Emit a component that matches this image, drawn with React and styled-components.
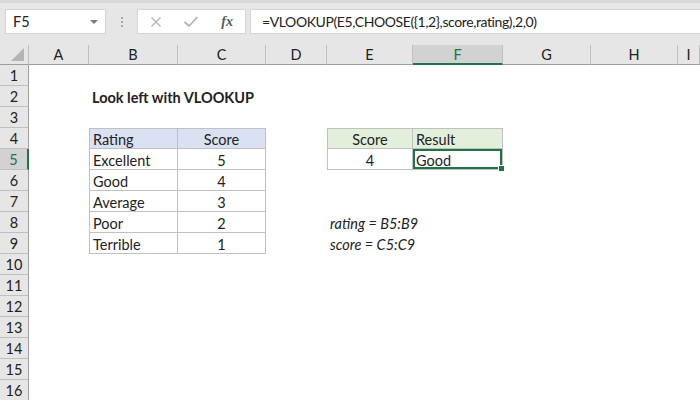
import React from "react";
import styled, { createGlobalStyle } from "styled-components";

const GREEN = "#217346";
const LINE = "#c0c0c0";

const GlobalStyle = createGlobalStyle`
  html, body {
    margin: 0;
    padding: 0;
    background: #ffffff;
    overflow: hidden;
  }
  body {
    font-family: "Lato", "Liberation Sans", sans-serif;
    color: #222;
  }
`;

const Window = styled.div`
  width: 700px;
  height: 400px;
  overflow: hidden;
  background: #fff;
`;

const TopBar = styled.div`
  height: 45px;
  box-sizing: border-box;
  background: #e6e6e6;
  border-top: 3px solid #dadada;
  display: flex;
  align-items: flex-start;
  padding: 6px 0 0 5px;
`;

const NameBox = styled.div`
  width: 101px;
  height: 25px;
  box-sizing: border-box;
  background: #fff;
  border: 1px solid #d4d4d4;
  display: flex;
  align-items: center;
  justify-content: space-between;
  padding: 0 7px 0 7px;
  font-size: 14.5px;
`;

const Caret = styled.span`
  width: 0;
  height: 0;
  border-left: 4px solid transparent;
  border-right: 4px solid transparent;
  border-top: 4px solid #7a7a7a;
`;

const Grip = styled.div`
  width: 31px;
  height: 25px;
  display: flex;
  flex-direction: column;
  align-items: center;
  justify-content: center;
  gap: 2px;
  span {
    width: 2px;
    height: 2px;
    background: #a8a8a8;
  }
`;

const FxBox = styled.div`
  width: 109px;
  height: 25px;
  box-sizing: border-box;
  background: #fff;
  border: 1px solid #d4d4d4;
  display: grid;
  grid-template-columns: 1fr 1fr 1fr;
  align-items: center;
  justify-items: center;
  margin-right: 4px;
`;

const FxItalic = styled.span`
  font-family: "Liberation Serif", serif;
  font-style: italic;
  font-weight: bold;
  font-size: 14px;
  color: #5a5a5a;
`;

const FormulaInput = styled.div`
  flex: 1;
  height: 25px;
  box-sizing: border-box;
  background: #fff;
  border: 1px solid #d4d4d4;
  border-right: none;
  display: flex;
  align-items: center;
  padding-left: 11px;
  font-size: 14px;
  letter-spacing: -0.4px;
  white-space: nowrap;
`;

const Sheet = styled.div`
  display: grid;
  grid-template-columns: 29px 60px 89px 88px 61px 86px 90px 88px 87px 1fr;
  grid-template-rows: 20px;
  grid-auto-rows: 21px;
  background: #fff;
`;

const Corner = styled.div`
  background: #e6e6e6;
  border-right: 1px solid ${LINE};
  border-bottom: 1px solid #9e9e9e;
  box-sizing: border-box;
  display: flex;
  align-items: flex-end;
  justify-content: flex-end;
  padding: 0 4px 3px 0;
`;

const Triangle = styled.span`
  width: 0;
  height: 0;
  border-left: 13px solid transparent;
  border-bottom: 13px solid #b4b4b4;
`;

const ColHead = styled.div`
  box-sizing: border-box;
  background: ${(p) => (p.$active ? "#d2d2d2" : "#e6e6e6")};
  color: ${(p) => (p.$active ? GREEN : "#222")};
  border-right: 1px solid ${LINE};
  border-bottom: ${(p) => (p.$active ? `2px solid ${GREEN}` : "1px solid #9e9e9e")};
  display: flex;
  align-items: center;
  justify-content: center;
  font-size: 14.5px;
  padding-top: ${(p) => (p.$active ? "1px" : "0")};
`;

const RowHead = styled.div`
  box-sizing: border-box;
  background: ${(p) => (p.$active ? "#d2d2d2" : "#e6e6e6")};
  color: ${(p) => (p.$active ? GREEN : "#222")};
  border-bottom: 1px solid ${LINE};
  border-right: ${(p) => (p.$active ? `2px solid ${GREEN}` : "1px solid #9e9e9e")};
  display: flex;
  align-items: center;
  justify-content: center;
  font-size: 14.5px;
  padding-top: 1px;
`;

const Cell = styled.div`
  position: relative;
  box-sizing: border-box;
  background: ${(p) => p.$fill || "transparent"};
  border-right: ${(p) => (p.$box ? `1px solid ${LINE}` : "none")};
  border-bottom: ${(p) => (p.$box ? `1px solid ${LINE}` : "none")};
  border-top: ${(p) => (p.$top ? `1px solid ${LINE}` : "none")};
  border-left: ${(p) => (p.$left ? `1px solid ${LINE}` : "none")};
  box-shadow: ${(p) => (p.$active ? `inset 0 0 0 2px ${GREEN}` : "none")};
  display: flex;
  align-items: center;
  justify-content: ${(p) => (p.$align === "center" ? "center" : "flex-start")};
  padding: 2px 3px 0 3px;
  font-size: 14.5px;
  font-weight: ${(p) => (p.$bold ? 700 : 400)};
  font-style: ${(p) => (p.$italic ? "italic" : "normal")};
  white-space: nowrap;
  overflow: visible;
  z-index: ${(p) => (p.$active ? 1 : 0)};
`;

const FillHandle = styled.span`
  position: absolute;
  right: -3px;
  bottom: -3px;
  width: 5px;
  height: 5px;
  background: ${GREEN};
  border: 1px solid #fff;
`;

const COLS = ["A", "B", "C", "D", "E", "F", "G", "H", "I"];
const ROWS = 16;

const BLUE = "#d9e1f2";
const LIGHTGREEN = "#e2efda";

const DATA = {
  B2: { text: "Look left with VLOOKUP", bold: true },
  B4: { text: "Rating", box: true, fill: BLUE },
  C4: { text: "Score", box: true, fill: BLUE, align: "center" },
  B5: { text: "Excellent", box: true },
  C5: { text: "5", box: true, align: "center" },
  B6: { text: "Good", box: true },
  C6: { text: "4", box: true, align: "center" },
  B7: { text: "Average", box: true },
  C7: { text: "3", box: true, align: "center" },
  B8: { text: "Poor", box: true },
  C8: { text: "2", box: true, align: "center" },
  B9: { text: "Terrible", box: true },
  C9: { text: "1", box: true, align: "center" },
  E4: { text: "Score", box: true, fill: LIGHTGREEN, align: "center" },
  F4: { text: "Result", box: true, fill: LIGHTGREEN },
  E5: { text: "4", box: true, align: "center" },
  F5: { text: "Good", box: true, active: true },
  E8: { text: "rating = B5:B9", italic: true },
  E9: { text: "score = C5:C9", italic: true },
};

const isBox = (col, row) => {
  const d = DATA[`${col}${row}`];
  return !!(d && d.box);
};

const X = () => (
  <svg width="12" height="12" viewBox="0 0 12 12">
    <path d="M1.5 1.5 L10.5 10.5 M10.5 1.5 L1.5 10.5" stroke="#b5b5b5" strokeWidth="1.4" fill="none" />
  </svg>
);

const Check = () => (
  <svg width="16" height="13" viewBox="0 0 16 13">
    <path d="M1.5 7 L6 11 L14.5 2" stroke="#b5b5b5" strokeWidth="1.8" fill="none" />
  </svg>
);

export default function App() {
  const rows = [];
  for (let r = 1; r <= ROWS; r++) {
    rows.push(
      <RowHead key={`h${r}`} $active={r === 5}>
        {r}
      </RowHead>
    );
    COLS.forEach((c, i) => {
      const d = DATA[`${c}${r}`] || {};
      const prevCol = COLS[i - 1];
      rows.push(
        <Cell
          key={`${c}${r}`}
          $box={d.box}
          $top={d.box && !isBox(c, r - 1)}
          $left={d.box && !(prevCol && isBox(prevCol, r))}
          $fill={d.fill}
          $align={d.align}
          $bold={d.bold}
          $italic={d.italic}
          $active={d.active}
        >
          {d.text}
          {d.active && <FillHandle />}
        </Cell>
      );
    });
  }

  return (
    <Window>
      <GlobalStyle />
      <TopBar>
        <NameBox>
          F5
          <Caret />
        </NameBox>
        <Grip>
          <span />
          <span />
          <span />
        </Grip>
        <FxBox>
          <X />
          <Check />
          <FxItalic>fx</FxItalic>
        </FxBox>
        <FormulaInput>=VLOOKUP(E5,CHOOSE({"{1,2}"},score,rating),2,0)</FormulaInput>
      </TopBar>
      <Sheet>
        <Corner>
          <Triangle />
        </Corner>
        {COLS.map((c) => (
          <ColHead key={c} $active={c === "F"}>
            {c}
          </ColHead>
        ))}
        {rows}
      </Sheet>
    </Window>
  );
}
